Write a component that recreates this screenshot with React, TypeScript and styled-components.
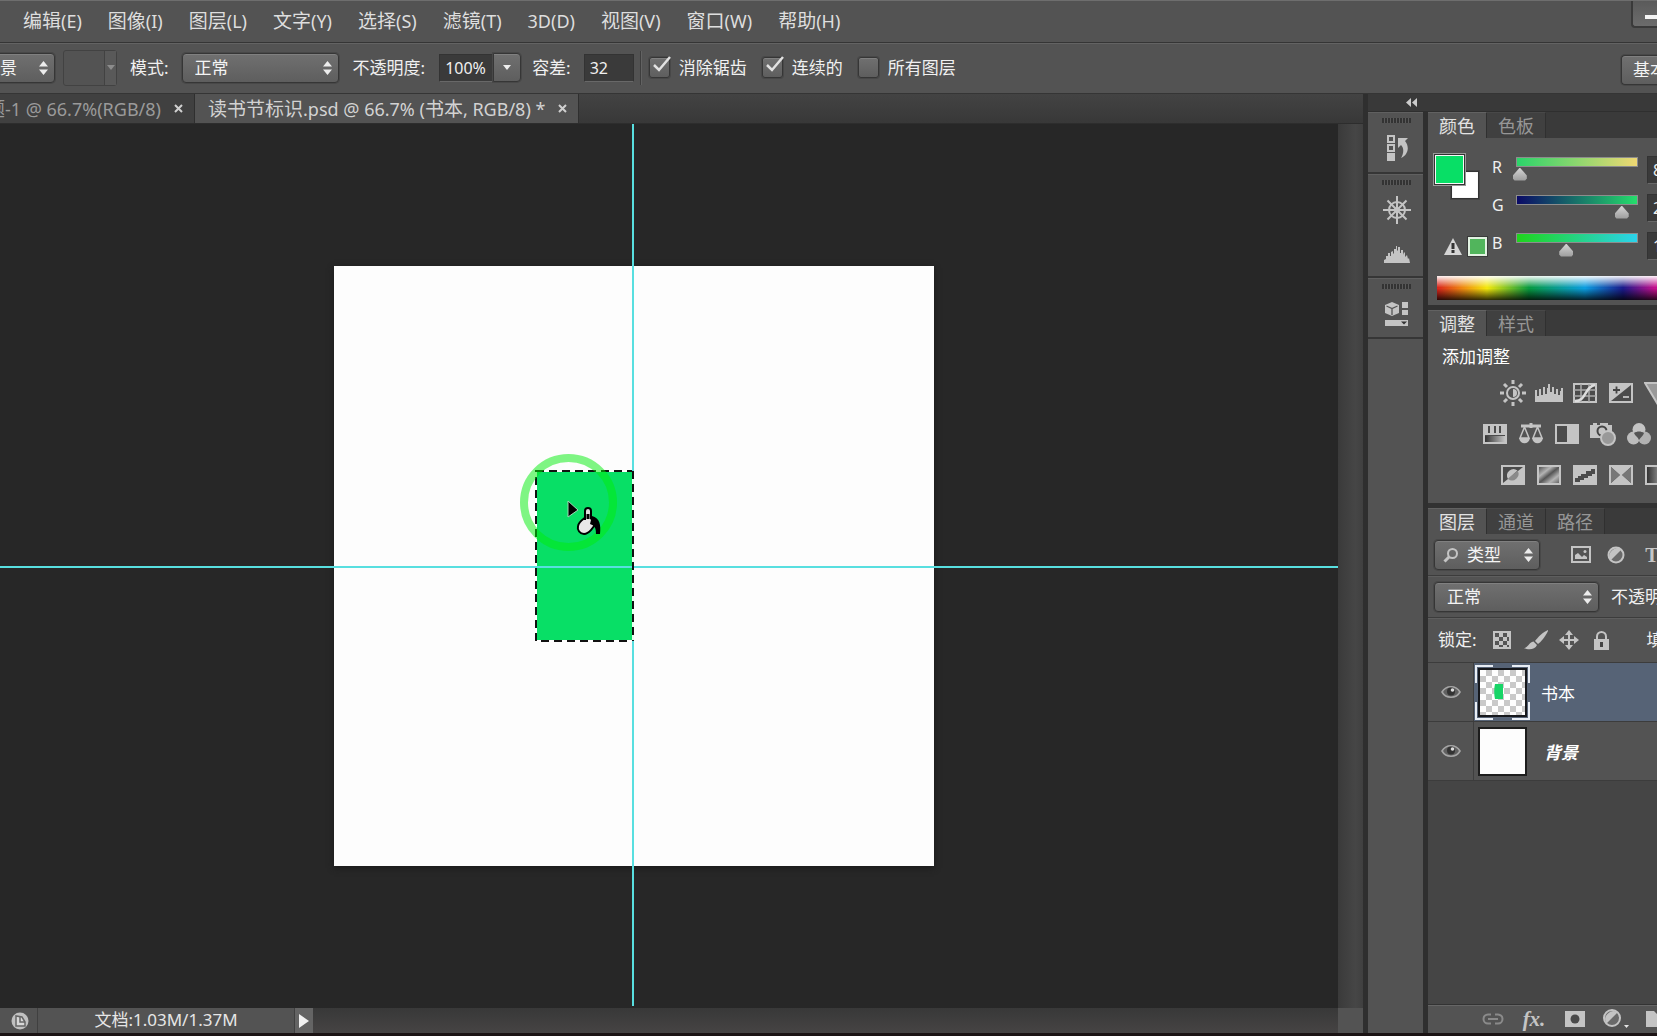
import React from "react";
import styled, { createGlobalStyle, css } from "styled-components";

const Global = createGlobalStyle`
  *, *::before, *::after { box-sizing: border-box; }
  html, body { margin: 0; height: 100%; overflow: hidden; background: #1b1314; }
  body, button, input, select {
    font-family: "Noto Sans", "Open Sans", "Noto Sans CJK SC", sans-serif;
  }
  button, input, select { margin: 0; color: inherit; }
  button { padding: 0; border: 0; background: none; }
  svg { display: block; flex: none; }
`;

const Window = styled.div`
  display: flex;
  flex-direction: column;
  height: 100vh;
  overflow: hidden;
  color: #f0f0f0;
  background: #535353;
  font-size: 17px;
  line-height: 20px;
  white-space: nowrap;
  border-bottom: 3px solid #1b1314;
`;

/* ---------- menu bar ---------- */

const MenuBar = styled.nav`
  display: flex;
  flex: none;
  justify-content: space-between;
  height: 43px;
  border-top: 1px solid #6e6e6e;
  border-bottom: 1px solid #353535;
`;

const MenuList = styled.div`
  display: flex;
  align-items: center;
  gap: 26px;
  padding: 0 23px 2px;
`;

const MenuButton = styled.button`
  color: #dedede;
  font-size: 18px;
  line-height: 24px;
`;

const Han = styled.span`
  font-size: 19px;
`;

const MinimizeButton = styled.button`
  display: flex;
  flex: none;
  align-items: center;
  justify-content: flex-end;
  width: 26px;
  height: 27px;
  border: 2px solid #3a3a3a;
  border-width: 0 0 2px 2px;
  border-radius: 0 0 0 4px;
  background: linear-gradient(#5a5a5a, #6c6c6c);
`;

const MinimizeBar = styled.span`
  width: 12px;
  height: 4px;
  margin-top: 6px;
  background: #f4f4f4;
`;

/* ---------- shared controls ---------- */

const raised = css`
  border: 1px solid #363636;
  border-radius: 4px;
  background: linear-gradient(#707070, #5e5e5e);
  box-shadow: inset 0 1px #808080, 0 0 0 1px #484848;
`;

const SelectFrame = styled.div<{ $width: number }>`
  ${raised}
  display: flex;
  flex: none;
  align-items: center;
  width: ${(p) => p.$width}px;
  height: 30px;
  padding-right: 6px;
`;

const SelectBox = styled.select<{ $indent?: number }>`
  flex: 1;
  min-width: 0;
  height: 28px;
  padding: 0 0 0 ${(p) => p.$indent ?? 12}px;
  appearance: none;
  border: 0;
  outline: 0;
  background: transparent;
  color: #f4f4f4;
  font-size: 17px;
  line-height: 20px;
`;

const UpDown = () => (
  <svg width="9" height="14" viewBox="0 0 9 14" fill="#ececec">
    <path d="M4.5 0 9 5.5H0ZM4.5 14 0 8.5h9Z" />
  </svg>
);

const NumberBox = styled.input<{ $width: number }>`
  width: ${(p) => p.$width}px;
  height: 28px;
  padding: 0 5px;
  border: 1px solid #333;
  border-bottom-color: #686868;
  border-radius: 0;
  outline: 0;
  background: #3a3a3a;
  color: #f0f0f0;
  font-size: 16px;
`;

/* ---------- options bar ---------- */

const OptionsBar = styled.div`
  display: flex;
  flex: none;
  justify-content: space-between;
  height: 51px;
  overflow: hidden;
  border-top: 1px solid #636363;
  border-bottom: 1px solid #353535;
`;

const Options = styled.div`
  display: flex;
  align-items: center;
  padding-bottom: 2px;
  margin-left: -26px;
`;

const PatternPicker = styled.button`
  display: flex;
  width: 54px;
  height: 36px;
  margin: 0 13px 0 8px;
  border: 1px solid #424242;
  border-radius: 3px;
`;

const PatternArrow = styled.span`
  display: grid;
  place-items: center;
  width: 12px;
  height: 100%;
  margin-left: auto;
  border-left: 1px solid #424242;
  background: #595959;
`;

const Field = styled.label`
  display: flex;
  align-items: center;
  gap: 13px;
  margin-right: 14px;
`;

const Joined = styled.div`
  display: flex;
  align-items: center;
  margin-right: 11px;
`;

const JoinedLabel = styled.label`
  margin-right: 14px;
`;

const DropButton = styled.button`
  ${raised}
  display: grid;
  place-items: center;
  width: 28px;
  height: 29px;
  border-radius: 0 4px 4px 0;
`;

const Rule = styled.span`
  width: 2px;
  height: 34px;
  margin: 0 7px 0 -8px;
  border-left: 1px solid #3e3e3e;
  border-right: 1px solid #626262;
`;

const Check = styled.label`
  display: flex;
  align-items: center;
  gap: 9px;
  margin-right: 15px;
`;

const Box = styled.span`
  ${raised}
  position: relative;
  width: 21px;
  height: 21px;
  border-radius: 3px;

  input {
    position: absolute;
    inset: 0;
    width: 100%;
    height: 100%;
    margin: 0;
    opacity: 0;
  }
  svg {
    position: absolute;
    left: 2px;
    top: -2px;
    display: none;
  }
  input:checked + svg { display: block; }
`;

const WorkspaceButton = styled.button`
  ${raised}
  flex: none;
  align-self: flex-start;
  width: 36px;
  height: 30px;
  margin-top: 11px;
  padding-left: 11px;
  overflow: hidden;
  border-right: 0;
  border-radius: 4px 0 0 4px;
  color: #f4f4f4;
  font-size: 17px;
  line-height: 26px;
  text-align: left;
`;

/* ---------- document area ---------- */

const Workspace = styled.div`
  display: flex;
  flex: 1;
  min-height: 0;
`;

const DocumentArea = styled.main`
  display: flex;
  flex: 1;
  flex-direction: column;
  min-width: 0;
`;

const TabStrip = styled.div`
  display: flex;
  flex: none;
  height: 30px;
  border-bottom: 1px solid #2d2d2d;
  background: linear-gradient(#434343, #383838);
`;

const DocTab = styled.div<{ $active?: boolean }>`
  display: flex;
  align-items: center;
  justify-content: flex-end;
  gap: 12px;
  padding: 0 10px 0 13px;
  border-right: 1px solid #2f2f2f;
  background: ${(p) => (p.$active ? "#535353" : "#404040")};
  color: ${(p) => (p.$active ? "#d2d2d2" : "#9a9a9a")};
  ${(p) => !p.$active && "width: 195px; overflow: hidden;"}
`;

const TabLabel = styled.button`
  flex: none;
  color: inherit;
  font-size: 18px;
  line-height: 24px;
`;

const CloseButton = styled.button`
  width: 11px;
  height: 12px;
`;

const CanvasRow = styled.div`
  display: flex;
  flex: 1;
  min-height: 0;
`;

const Stage = styled.div`
  position: relative;
  flex: 1;
  overflow: hidden;
  background: #272727;
`;

const Artboard = styled.div`
  position: absolute;
  left: 334px;
  top: 142px;
  width: 600px;
  height: 600px;
  background: #fdfdfd;
  box-shadow: 0 2px 6px #1a1a1a;
`;

const Selection = styled.svg`
  position: absolute;
  left: 535px;
  top: 346px;
`;

const Guide = styled.div<{ $axis: "x" | "y" }>`
  position: absolute;
  background: #58dfe0;
  ${(p) =>
    p.$axis === "x"
      ? "left: 0; right: 0; top: 442px; height: 2px;"
      : "top: 0; bottom: 2px; left: 632px; width: 2px;"}
`;

const ClickRing = styled.div`
  position: absolute;
  left: 520px;
  top: 330px;
  width: 97px;
  height: 97px;
  border: 8px solid rgba(0, 238, 10, 0.5);
  border-radius: 50%;
`;

const BucketCursor = styled.svg`
  position: absolute;
  left: 566px;
  top: 376px;
`;

const ScrollTrack = styled.div`
  flex: none;
  width: 25px;
  background: linear-gradient(90deg, #3a3a3a, #464646 70%, #404040);
`;

const StatusBar = styled.footer`
  display: flex;
  flex: none;
  height: 25px;
  background: linear-gradient(#383838, #464444);
`;

const StatusIcon = styled.button`
  display: grid;
  place-items: center;
  width: 38px;
  padding-left: 3px;
  border-right: 1px solid #404040;
  background: #535353;
`;

const StatusText = styled.div`
  width: 257px;
  border-right: 1px solid #404040;
  background: #535353;
  color: #e6e6e6;
  line-height: 24px;
  text-align: center;
`;

const StatusArrow = styled.button`
  display: grid;
  place-items: center;
  width: 18px;
  background: #646464;
`;

const ScrollCorner = styled.div`
  width: 25px;
  margin-left: auto;
  background: #535353;
`;

/* ---------- dock ---------- */

const Dock = styled.aside`
  display: flex;
  flex: none;
  flex-direction: column;
  width: 294px;
  border-left: 5px solid #2f2f2f;
  overflow: hidden;
`;

const DockHeader = styled.div`
  flex: none;
  height: 18px;
  padding: 4px 0 0 38px;
  background: #393939;
  border-bottom: 1px solid #2f2f2f;
`;

const DockBody = styled.div`
  display: flex;
  flex: 1;
  min-height: 0;
`;

const IconButton = styled.button`
  display: grid;
  flex: none;
  place-items: center;
  width: 28px;
  height: 28px;
`;

const IconColumn = styled.div`
  flex: none;
  width: 55px;
`;

const IconGroup = styled.div<{ $height: number }>`
  display: flex;
  flex-direction: column;
  align-items: center;
  height: ${(p) => p.$height}px;
  padding: 5px 0 0 2px;
  border-top: 1px solid #606060;
  border-bottom: 2px solid #363636;

  ${IconButton} + ${IconButton} { margin-top: 16px; }
`;

const Grip = styled.span`
  flex: none;
  width: 29px;
  height: 5px;
  margin-bottom: 11px;
  background: repeating-linear-gradient(90deg, #333 0 2px, #5a5a5a 2px 3px);
`;

const Panels = styled.div`
  display: flex;
  flex: 1;
  flex-direction: column;
  min-width: 0;
  border-left: 5px solid #2f2f2f;
`;

const Panel = styled.section<{ $grow?: boolean }>`
  display: flex;
  flex: ${(p) => (p.$grow ? "1" : "none")};
  flex-direction: column;
  min-height: 0;
  overflow: hidden;
  border-bottom: ${(p) => (p.$grow ? "0" : "5px solid #323232")};
`;

const PanelTabs = styled.div`
  display: flex;
  flex: none;
  height: 26px;
  background: #3a3a3a;
`;

const PanelTab = styled.button<{ $active?: boolean }>`
  height: 26px;
  padding: 0 11px;
  border-top: 1px solid ${(p) => (p.$active ? "#626262" : "#484848")};
  border-right: 1px solid #303030;
  background: ${(p) => (p.$active ? "#535353" : "#404040")};
  color: ${(p) => (p.$active ? "#e2e2e2" : "#969696")};
  font-size: 18px;
  line-height: 24px;
`;

const ColorBody = styled.div`
  display: flex;
  height: 138px;
  padding-top: 16px;
`;

const SwatchColumn = styled.div`
  display: flex;
  flex: none;
  flex-direction: column;
  justify-content: space-between;
  width: 64px;
  padding: 0 0 20px 6px;
`;

const SwatchPair = styled.div`
  display: grid;
  grid-template: 17px 14px 14px / 17px 14px 14px;
`;

const Swatch = styled.button<{ $color: string; $front?: boolean }>`
  grid-area: ${(p) => (p.$front ? "1 / 1 / 3 / 3" : "2 / 2 / 4 / 4")};
  z-index: ${(p) => (p.$front ? 1 : 0)};
  border: 2px solid #f8f8f8;
  outline: 1px solid #333;
  outline-offset: -1px;
  box-shadow: 0 0 0 1px ${(p) => (p.$front ? "#999" : "#444")};
  background: ${(p) => p.$color};
`;

const GamutRow = styled.div`
  display: flex;
  align-items: center;
  gap: 6px;
  padding-left: 10px;
`;

const GamutSwatch = styled.button`
  width: 19px;
  height: 19px;
  border: 2px solid #e2f2e2;
  outline: 1px solid #3a3a3a;
  background: #51b55c;
`;

const Sliders = styled.div`
  flex: 1;
  min-width: 0;
  padding-top: 2px;
`;

const SliderRow = styled.div`
  display: flex;
  align-items: flex-start;
  height: 38px;
`;

const Letter = styled.span`
  flex: none;
  width: 24px;
  font-size: 16px;
  line-height: 22px;
`;

const SliderControl = styled.span`
  display: flex;
  flex: none;
  flex-direction: column;
  width: 122px;
  padding-top: 1px;
  margin-right: 9px;
`;

const Track = styled.span<{ $from: string; $to: string }>`
  height: 10px;
  border: 1px solid #8d8d8d;
  background: linear-gradient(90deg, ${(p) => p.$from}, ${(p) => p.$to});
`;

const Range = styled.input`
  width: auto;
  height: 14px;
  margin: 0 -7px;
  appearance: none;
  background: transparent;

  &::-webkit-slider-thumb {
    appearance: none;
    width: 14px;
    height: 13px;
    background: linear-gradient(#d5d5d5, #9c9c9c);
    clip-path: polygon(50% 0, 100% 62%, 100% 85%, 88% 100%, 12% 100%, 0 85%, 0 62%);
  }
`;

const Spectrum = styled.div`
  height: 24px;
  margin: 0 0 5px 9px;
  background:
    linear-gradient(rgba(255, 255, 255, 0.95), rgba(255, 255, 255, 0) 48%, rgba(0, 0, 0, 0) 52%, rgba(0, 0, 0, 0.8)),
    linear-gradient(90deg, #d8231c 0, #ef8a10 26px, #f3e80c 50px, #079a40 92px, #0b9de0 148px, #1a1a8a 186px, #c4108c 218px);
`;

const AdjustBody = styled.div`
  height: 167px;
  padding-left: 14px;
`;

const AdjustTitle = styled.h2`
  margin: 11px 0 12px;
  color: #fff;
  font-size: 17px;
  font-weight: 400;
  line-height: 20px;
`;

const AdjustRow = styled.div<{ $indent: number }>`
  display: flex;
  gap: 8px;
  height: 28px;
  margin: 0 0 13px ${(p) => p.$indent}px;
`;

const LayerBar = styled.div<{ $height: number }>`
  display: flex;
  flex: none;
  align-items: center;
  height: ${(p) => p.$height}px;
  padding-left: 6px;
  border-bottom: 1px solid #3c3c3c;
  box-shadow: 0 1px #5e5e5e;
`;

const Spacer = styled.span<{ $width: number }>`
  flex: none;
  width: ${(p) => p.$width}px;
`;

const TypeMark = styled.span`
  font: 700 20px/28px "Liberation Serif", serif;
  color: #c6c6c6;
`;

const LayerText = styled.span`
  flex: none;
  padding: 0 4px;
`;

const LayerRow = styled.div<{ $selected?: boolean }>`
  display: flex;
  flex: none;
  align-items: center;
  height: 59px;
  border-bottom: 1px solid #3c3c3c;
  background: ${(p) => (p.$selected ? "#566376" : "#535353")};
`;

const EyeCell = styled.button`
  display: grid;
  place-items: center;
  flex: none;
  width: 46px;
  height: 100%;
  border-right: 1px solid #3e3e3e;
  background: #535353;
`;

const LayerName = styled.span<{ $locked?: boolean }>`
  padding: 3px 0 0 ${(p) => (p.$locked ? 13 : 10)}px;
  color: #fff;
  ${(p) => p.$locked && "font-style: italic; font-weight: 700;"}
`;

const EmptyList = styled.div`
  flex: 1;
  background: #454545;
`;

const LayerFooter = styled.div`
  display: flex;
  flex: none;
  gap: 13px;
  height: 29px;
  padding-left: 51px;
  border-top: 1px solid #333;
  box-shadow: inset 0 1px #666;
`;

const FxMark = styled.span`
  font: italic 700 21px/24px "Liberation Serif", serif;
  color: #c4c4c4;
`;

/* ---------- icons ---------- */

const G = "#c4c4c4";
const D = "#4b4b4b";

const Svg = ({ w = 26, h = 24, children }: { w?: number; h?: number; children: React.ReactNode }) => (
  <svg width={w} height={h} viewBox={`0 0 ${w} ${h}`} fill="none">
    {children}
  </svg>
);

const Frame = () => <rect x="2" y="3" width="22" height="18" fill={D} stroke={G} strokeWidth="2" />;

const HistoryIcon = () => (
  <Svg w={24} h={28}>
    <path d="M3 2h6v6H3zM3 11h6v6H3z" stroke={G} strokeWidth="2" />
    <path d="M2 19h8v8H2z" fill={G} />
    <path d="M13 4h10l-3 3c5 6 3 14-4 17 3-5 3-10 0-13l-3 3z" fill={G} />
  </Svg>
);

const WheelIcon = () => (
  <Svg w={28} h={28}>
    <g stroke={G}>
      <circle cx="14" cy="14" r="8" strokeWidth="2" />
      <circle cx="14" cy="14" r="2.5" fill={G} />
      <path d="M14 0v28M0 14h28M4.500 4.500l19 19M23.500 4.500l-19 19" strokeWidth="2" />
    </g>
  </Svg>
);

const HistogramIcon = () => (
  <Svg w={28} h={18}>
    <path d="M1 18v-3l2-1v-3h2V8h2v3h1V7l2-1v3l1-1V4h2V1h1v5l1-1V2h2v6h1V5h2v5l1-3 1 1v4l2-2 1 4 1-1 1 5z" fill={G} />
  </Svg>
);

const CubeIcon = () => (
  <Svg w={26} h={28}>
    <path d="M8 2l7 3v8l-7 3-7-3V5z" fill={G} />
    <path d="M2.500 6 8 8.500 13.500 6M8 8.500V15" stroke="#555" strokeWidth="1.3" />
    <path d="M18 2h6v6h-6zM18 10h6v5h-6zM1 20h23v6H1z" fill={G} />
    <path d="M17 21.500h6l-3 3z" fill="#333" />
  </Svg>
);

const Brightness = () => (
  <Svg w={26} h={26}>
    <circle cx="13" cy="13" r="6" stroke={G} strokeWidth="2" />
    <path d="M13 9a4 4 0 0 1 0 8z" fill={G} />
    <path d="M13 0v4M13 22v4M0 13h4M22 13h4M4 4l3 3M19 19l3 3M4 22l3-3M19 7l3-3" stroke={G} strokeWidth="3" />
  </Svg>
);

const Levels = () => (
  <Svg w={28} h={18}>
    <path d="M0 18V6h2v6h2V5h2v6h2V3h2v7h2V4h1V0h2v8h2V3h2v7h2V5h2v6h2V7h1V4h2v14z" fill={G} />
  </Svg>
);

const Curves = () => (
  <Svg>
    <Frame />
    <path d="M2 9h22M2 15h22M9 3v18M17 3v18" stroke="#aaa" strokeWidth="1.5" />
    <path d="M3 20c12 0 9-14 20-16" stroke="#ddd" strokeWidth="2.5" />
  </Svg>
);

const Exposure = () => (
  <Svg>
    <Frame />
    <path d="M3 20V4h20z" fill={G} />
    <path d="M5 9h7M8.500 5.500v7" stroke="#444" strokeWidth="1.8" />
    <path d="M15 16h6" stroke={G} strokeWidth="1.8" />
  </Svg>
);

const Vibrance = () => (
  <Svg>
    <path d="M1 2h24L13 22z" fill="#999" stroke={G} strokeWidth="2" />
  </Svg>
);

const HueSat = () => (
  <Svg>
    <defs>
      <linearGradient id="hs">
        <stop stopColor="#333" />
        <stop offset="1" stopColor={G} />
      </linearGradient>
    </defs>
    <Frame />
    <path d="M3 4h3v7H3zM8 4h4v7H8zM14 4h3v7h-3zM19 4h4v7h-4zM2 11h22v2H2z" fill={G} />
    <path d="M3 14h20v6H3z" fill="url(#hs)" />
  </Svg>
);

const Balance = () => (
  <Svg>
    <path d="M3 4h20M13 1v5" stroke={G} strokeWidth="3" />
    <path d="M6.500 5 2 16h9zM19.500 5 15 16h9z" stroke={G} strokeWidth="1.5" />
    <path d="M1 16h11c-1 7-10 7-11 0zM14 16h11c-1 7-10 7-11 0z" fill={G} />
  </Svg>
);

const BlackWhite = () => (
  <Svg>
    <Frame />
    <path d="M13 4h10v16H13z" fill={G} />
  </Svg>
);

const PhotoFilter = () => (
  <Svg>
    <path d="M0 3h3V1h4v2h3V1h8v2h4v13H0z" fill={G} />
    <circle cx="12" cy="9" r="4.5" stroke="#444" strokeWidth="2" />
    <circle cx="18" cy="16" r="7" fill="#999" stroke={G} strokeWidth="2" />
  </Svg>
);

const Mixer = () => (
  <Svg>
    <circle cx="13" cy="7.5" r="6.5" fill={G} />
    <circle cx="7.5" cy="16" r="6.5" fill="#bdbdbd" />
    <circle cx="18.5" cy="16" r="6.5" fill="#b2b2b2" />
    <path d="M8 11c3-2 7-2 10 0-1 3-3 4-5 7-1-3-4-4-5-7z" fill="#555" />
  </Svg>
);

const Invert = () => (
  <Svg>
    <Frame />
    <path d="M3 20 23 4v16z" fill={G} />
    <path d="M8 16a6.500 6.500 0 0 1 9.500-8.500z" fill={G} />
    <path d="M17.500 7.500A6.500 6.500 0 0 1 8 16z" fill="#8a8a8a" />
  </Svg>
);

const Posterize = () => (
  <Svg>
    <defs>
      <linearGradient id="bands" x1="0" y1="0" x2="1" y2="1">
        <stop stopColor="#555" />
        <stop offset="0.3" stopColor="#b4b4b4" />
        <stop offset="0.5" stopColor="#555" />
        <stop offset="0.75" stopColor="#b4b4b4" />
        <stop offset="1" stopColor="#666" />
      </linearGradient>
    </defs>
    <Frame />
    <path d="M3 4h20v16H3z" fill="url(#bands)" />
  </Svg>
);

const Threshold = () => (
  <Svg>
    <Frame />
    <path d="M3 4h20v2h-4v2h-5v3H9v2H6v2H3zM3 20v-1h5v-2h4v-2h4v-2h4v-2h3v9z" fill={G} />
  </Svg>
);

const Selective = () => (
  <Svg>
    <Frame />
    <path d="M3 4h20L13 13z" fill={G} />
    <path d="M3 20h20L13 11z" fill={G} />
    <path d="M3 4v16l9-8zM23 4v16l-9-8z" fill="#777" />
  </Svg>
);

const GradientMap = () => (
  <Svg>
    <Frame />
    <path d="M3 4h20v16H3z" fill="url(#hs)" />
  </Svg>
);

const Warning = () => (
  <Svg w={18} h={17}>
    <path d="M9 0l9 17H0z" fill="#d5d5d5" />
    <path d="M9 5v6M9 12v3" stroke="#333" strokeWidth="3" />
  </Svg>
);

const SearchIcon = () => (
  <Svg w={16} h={16}>
    <circle cx="9.5" cy="6.5" r="4.5" stroke={G} strokeWidth="2" />
    <path d="M6 10l-4.500 4.500" stroke={G} strokeWidth="3" />
  </Svg>
);

const PictureIcon = () => (
  <Svg w={20} h={17}>
    <path d="M1 1h18v15H1z" stroke={G} strokeWidth="2" />
    <path d="M4 13V9l3-2 4 4 2-2 3 2v2z" fill={G} />
    <circle cx="14" cy="5.5" r="1.5" fill={G} />
  </Svg>
);

const HalfCircle = () => (
  <Svg w={18} h={18}>
    <circle cx="9" cy="9" r="7.5" fill="#6a6a6a" stroke={G} strokeWidth="2" />
    <path d="M14.500 3.500A8 8 0 0 0 3.500 14.500z" fill={G} />
  </Svg>
);

const HalfCircleMenu = () => (
  <Svg w={28} h={22}>
    <circle cx="10" cy="10" r="8" fill="#6a6a6a" stroke={G} strokeWidth="2" />
    <path d="M15.500 4.500A8 8 0 0 0 4.500 15.500z" fill={G} />
    <path d="M22 17h5l-2.500 3z" fill="#e4e4e4" />
  </Svg>
);

const CheckerIcon = () => (
  <Svg w={18} h={18}>
    <path d="M1 1h16v16H1z" fill="#555" stroke={G} strokeWidth="2" />
    <path d="M6 2h4v4H6zM14 2h3v4h-3zM2 6h4v4H2zM10 6h4v4h-4zM6 10h4v4H6zM14 10h3v4h-3zM2 14h4v3H2zM10 14h4v3h-4z" fill={G} />
  </Svg>
);

const BrushIcon = () => (
  <Svg w={24} h={20}>
    <path d="M24 1c-3 6-7 11-10 13l-3-3C14 7 19 2 24 0z" fill={G} />
    <path d="M9.500 11.500 13 15c-2 5-9 5-13 3 4 0 5-6 9.500-6.500z" fill={G} />
  </Svg>
);

const MoveIcon = () => (
  <Svg w={20} h={20}>
    <path d="M10 3v14M3 10h14" stroke={G} strokeWidth="2" />
    <path d="M10 0l4 5H6zM10 20l-4-5h8zM0 10l5-4v8zM20 10l-5 4V6z" fill={G} />
  </Svg>
);

const LockIcon = () => (
  <Svg w={17} h={19}>
    <path d="M4 9V5.500a4.500 4.500 0 0 1 9 0V9" stroke={G} strokeWidth="2" />
    <path d="M1 8h15v11H1z" fill={G} />
    <path d="M8.500 11v5" stroke="#444" strokeWidth="3" />
  </Svg>
);

const EyeIcon = () => (
  <Svg w={20} h={14}>
    <path d="M1 7c4-7 14-7 18 0-4 7-14 7-18 0z" fill="#606060" stroke="#a6a6a6" strokeWidth="1.6" />
    <circle cx="10" cy="6.5" r="4" fill="#333" />
    <circle cx="11.500" cy="5" r="1.8" fill="#ddd" />
  </Svg>
);

const LinkIcon = () => (
  <Svg w={22} h={12}>
    <path d="M9 1.500H6a4.500 4.500 0 0 0 0 9h3M13 1.500h3a4.500 4.500 0 0 1 0 9h-3M6 6h10" stroke="#8a8a8a" strokeWidth="2" />
  </Svg>
);

const MaskIcon = () => (
  <Svg w={20} h={16}>
    <path d="M0 0h20v16H0z" fill={G} />
    <circle cx="10" cy="8" r="4.5" fill="#4a4a4a" />
  </Svg>
);

const FolderIcon = () => (
  <Svg w={22} h={16}>
    <path d="M0 0h8l3 3h11v13H0z" fill={G} />
  </Svg>
);

const SyncIcon = () => (
  <Svg w={20} h={20}>
    <circle cx="10" cy="10" r="8.5" fill="#c0c0c0" />
    <path d="M6 5v10h9v-4l-3-5z" fill="#d8d8d8" stroke="#666" strokeWidth="1.5" />
    <path d="M10 6v5h5" stroke="#666" strokeWidth="1.5" />
  </Svg>
);

const CloseIcon = () => (
  <Svg w={11} h={11}>
    <path d="M2 2l7 7M9 2 2 9" stroke="#d0d0d0" strokeWidth="2" />
  </Svg>
);

const Caret = ({ color = "#eee" }: { color?: string }) => (
  <Svg w={8} h={5}>
    <path d="M0 0h8L4 5z" fill={color} />
  </Svg>
);

const LayerThumb = () => (
  <Svg w={57} h={57}>
    <defs>
      <pattern id="checks" width="12" height="12" patternUnits="userSpaceOnUse" x="6" y="6">
        <path d="M0 0h12v12H0z" fill="#fff" />
        <path d="M6 0h6v6H6zM0 6h6v6H0z" fill="#cacaca" />
      </pattern>
    </defs>
    <rect x="5" y="5" width="47" height="47" fill="url(#checks)" stroke="#16181c" strokeWidth="2" />
    <path d="M21 20h8v15h-8c-1-4-1-11 0-15z" fill="#18d567" />
    <path d="M2 19V2h17M38 2h17v17M55 38v17H38M19 55H2V38" stroke="#e8edf4" strokeWidth="2" />
  </Svg>
);

const PlainThumb = () => (
  <Svg w={57} h={57}>
    <rect x="5" y="5" width="47" height="47" fill="#fdfdfd" stroke="#1d1d1d" strokeWidth="2" />
  </Svg>
);

/* ---------- pieces ---------- */

/** Sets the Chinese runs of a label one step larger than its Latin runs. */
const Mixed = ({ text }: { text: string }) => (
  <>
    {text.split(/([\u4e00-\u9fff]+)/).map((run, i) =>
      i % 2 ? <Han key={i}>{run}</Han> : run
    )}
  </>
);

const menus = [
  "编辑(E)", "图像(I)", "图层(L)", "文字(Y)", "选择(S)", "滤镜(T)", "3D(D)", "视图(V)", "窗口(W)", "帮助(H)",
];

const checks = [
  { label: "消除锯齿", on: true },
  { label: "连续的", on: true },
  { label: "所有图层", on: false },
];

const channels = [
  { name: "R", value: 8, from: "#2bd46a", to: "#efd873" },
  { name: "G", value: 221, from: "#0b0a66", to: "#25dd6c" },
  { name: "B", value: 105, from: "#1fd41c", to: "#2bd3ec" },
];

const adjustments = [
  { indent: 57, icons: [["亮度", Brightness], ["色阶", Levels], ["曲线", Curves], ["曝光度", Exposure], ["自然饱和度", Vibrance]] },
  { indent: 39, icons: [["色相", HueSat], ["色彩平衡", Balance], ["黑白", BlackWhite], ["照片滤镜", PhotoFilter], ["通道混合器", Mixer]] },
  { indent: 57, icons: [["反相", Invert], ["色调分离", Posterize], ["阈值", Threshold], ["可选颜色", Selective], ["渐变映射", GradientMap]] },
] as { indent: number; icons: [string, React.FC][] }[];

const Dropdown = ({ label, value, width, indent, icon }: {
  label: string; value: string; width: number; indent?: number; icon?: React.ReactNode;
}) => (
  <SelectFrame $width={width}>
    {icon}
    <SelectBox aria-label={label} $indent={indent}>
      <option>{value}</option>
    </SelectBox>
    <UpDown />
  </SelectFrame>
);

const Tabs = ({ names }: { names: string[] }) => (
  <PanelTabs>
    {names.map((n, i) => (
      <PanelTab key={n} $active={i === 0}>{n}</PanelTab>
    ))}
  </PanelTabs>
);

export default function App() {
  return (
    <Window>
      <Global />
      <MenuBar>
        <MenuList>
          {menus.map((m) => (
            <MenuButton key={m}><Mixed text={m} /></MenuButton>
          ))}
        </MenuList>
        <MinimizeButton aria-label="最小化"><MinimizeBar /></MinimizeButton>
      </MenuBar>

      <OptionsBar>
        <Options>
          <Dropdown label="填充源" value="前景" width={81} indent={8} />
          <PatternPicker aria-label="图案">
            <PatternArrow><Caret color="#8c8c8c" /></PatternArrow>
          </PatternPicker>
          <Field>
            模式:
            <Dropdown label="模式" value="正常" width={157} />
          </Field>
          <Joined>
            <JoinedLabel htmlFor="opacity">不透明度:</JoinedLabel>
            <NumberBox id="opacity" $width={54} defaultValue="100%" />
            <DropButton aria-label="不透明度滑块"><Caret /></DropButton>
          </Joined>
          <Field>
            容差:
            <NumberBox $width={50} defaultValue="32" />
          </Field>
          <Rule />
          {checks.map((c) => (
            <Check key={c.label}>
              <Box>
                <input type="checkbox" defaultChecked={c.on} />
                <svg width="20" height="18" viewBox="0 0 20 18" fill="none">
                  <path d="M2 9l5 5L18 1" stroke="#e2e2e2" strokeWidth="2.5" />
                </svg>
              </Box>
              {c.label}
            </Check>
          ))}
        </Options>
        <WorkspaceButton>基本功能</WorkspaceButton>
      </OptionsBar>

      <Workspace>
        <DocumentArea>
          <TabStrip>
            <DocTab>
              <TabLabel><Mixed text="未标题-1 @ 66.7%(RGB/8)" /></TabLabel>
              <CloseButton aria-label="关闭"><CloseIcon /></CloseButton>
            </DocTab>
            <DocTab $active>
              <TabLabel><Mixed text="读书节标识.psd @ 66.7% (书本, RGB/8) *" /></TabLabel>
              <CloseButton aria-label="关闭"><CloseIcon /></CloseButton>
            </DocTab>
          </TabStrip>
          <CanvasRow>
            <Stage>
              <Artboard />
              <Selection width="99" height="172" viewBox="0 0 99 172" fill="none">
                <rect x="1" y="1" width="97" height="170" fill="#08df66" stroke="#fff" strokeWidth="2" />
                <rect x="1" y="1" width="97" height="170" stroke="#111" strokeWidth="2" strokeDasharray="8 5" />
              </Selection>
              <Guide $axis="y" />
              <Guide $axis="x" />
              <Selection width="99" height="172" viewBox="0 0 99 172" fill="none">
                <path d="M98 1v170" stroke="#e8fff0" strokeWidth="2" />
                <path d="M98 1v170" stroke="#111" strokeWidth="2" strokeDasharray="8 5" />
              </Selection>
              <ClickRing />
              <BucketCursor width="38" height="38" viewBox="0 0 38 38">
                <path d="M2 1v16l10-7z" fill="#000" stroke="#9fd8b4" />
                <path d="M12 26c1-5 6-7 9-10l9 6c-2 5-7 12-12 12-4 0-7-4-6-8z" fill="#e8e8e8" stroke="#000" strokeWidth="2" />
                <path d="M19 20v-9c0-4 6-4 6 0v8" fill="#ddd" stroke="#000" strokeWidth="2" />
                <path d="M22 14v5" stroke="#000" strokeWidth="3" />
                <path d="M26 16c8 2 9 9 8 18h-4c0-6-1-8-6-10z" fill="#000" />
              </BucketCursor>
            </Stage>
            <ScrollTrack />
          </CanvasRow>
          <StatusBar>
            <StatusIcon aria-label="同步"><SyncIcon /></StatusIcon>
            <StatusText>文档:1.03M/1.37M</StatusText>
            <StatusArrow aria-label="更多">
              <Svg w={10} h={14}><path d="M0 0l10 7-10 7z" fill="#f2f2f2" /></Svg>
            </StatusArrow>
            <ScrollCorner />
          </StatusBar>
        </DocumentArea>

        <Dock>
          <DockHeader>
            <Svg w={12} h={10}><path d="M5 0v9L0 4.500zM11 0v9L6 4.500z" fill="#ccc" /></Svg>
          </DockHeader>
          <DockBody>
            <IconColumn>
              <IconGroup $height={62}>
                <Grip />
                <IconButton aria-label="历史记录"><HistoryIcon /></IconButton>
              </IconGroup>
              <IconGroup $height={104}>
                <Grip />
                <IconButton aria-label="导航器"><WheelIcon /></IconButton>
                <IconButton aria-label="直方图"><HistogramIcon /></IconButton>
              </IconGroup>
              <IconGroup $height={61}>
                <Grip />
                <IconButton aria-label="属性"><CubeIcon /></IconButton>
              </IconGroup>
            </IconColumn>
            <Panels>
              <Panel>
                <Tabs names={["颜色", "色板"]} />
                <ColorBody>
                  <SwatchColumn>
                    <SwatchPair>
                      <Swatch $front $color="#08df66" aria-label="前景色" />
                      <Swatch $color="#fff" aria-label="背景色" />
                    </SwatchPair>
                    <GamutRow>
                      <Warning />
                      <GamutSwatch aria-label="色域警告" />
                    </GamutRow>
                  </SwatchColumn>
                  <Sliders>
                    {channels.map((c) => (
                      <SliderRow key={c.name}>
                        <Letter>{c.name}</Letter>
                        <SliderControl>
                          <Track $from={c.from} $to={c.to} />
                          <Range type="range" max={255} defaultValue={c.value} aria-label={c.name} />
                        </SliderControl>
                        <NumberBox $width={50} defaultValue={c.value} aria-label={`${c.name} 值`} />
                      </SliderRow>
                    ))}
                  </Sliders>
                </ColorBody>
                <Spectrum />
              </Panel>

              <Panel>
                <Tabs names={["调整", "样式"]} />
                <AdjustBody>
                  <AdjustTitle>添加调整</AdjustTitle>
                  {adjustments.map((row) => (
                    <AdjustRow key={row.icons[0][0]} $indent={row.indent}>
                      {row.icons.map(([name, Icon]) => (
                        <IconButton key={name} aria-label={name}><Icon /></IconButton>
                      ))}
                    </AdjustRow>
                  ))}
                </AdjustBody>
              </Panel>

              <Panel $grow>
                <Tabs names={["图层", "通道", "路径"]} />
                <LayerBar $height={42}>
                  <Dropdown
                    label="类型" value="类型" width={106} indent={8}
                    icon={<><Spacer $width={8} /><SearchIcon /></>}
                  />
                  <Spacer $width={27} />
                  <IconButton aria-label="像素图层"><PictureIcon /></IconButton>
                  <Spacer $width={7} />
                  <IconButton aria-label="调整图层"><HalfCircle /></IconButton>
                  <Spacer $width={8} />
                  <IconButton aria-label="文字图层"><TypeMark>T</TypeMark></IconButton>
                </LayerBar>
                <LayerBar $height={42}>
                  <Dropdown label="混合模式" value="正常" width={165} />
                  <Spacer $width={8} />
                  <LayerText>不透明度:</LayerText>
                </LayerBar>
                <LayerBar $height={45}>
                  <LayerText>锁定:</LayerText>
                  <Spacer $width={7} />
                  <IconButton aria-label="锁定透明像素"><CheckerIcon /></IconButton>
                  <Spacer $width={6} />
                  <IconButton aria-label="锁定图像像素"><BrushIcon /></IconButton>
                  <Spacer $width={5} />
                  <IconButton aria-label="锁定位置"><MoveIcon /></IconButton>
                  <Spacer $width={5} />
                  <IconButton aria-label="锁定全部"><LockIcon /></IconButton>
                  <Spacer $width={27} />
                  <LayerText>填充:</LayerText>
                </LayerBar>
                <LayerRow $selected>
                  <EyeCell aria-label="可见性"><EyeIcon /></EyeCell>
                  <LayerThumb />
                  <LayerName>书本</LayerName>
                </LayerRow>
                <LayerRow>
                  <EyeCell aria-label="可见性"><EyeIcon /></EyeCell>
                  <PlainThumb />
                  <LayerName $locked>背景</LayerName>
                </LayerRow>
                <EmptyList />
                <LayerFooter>
                  <IconButton aria-label="链接图层"><LinkIcon /></IconButton>
                  <IconButton aria-label="图层样式"><FxMark>fx.</FxMark></IconButton>
                  <IconButton aria-label="添加蒙版"><MaskIcon /></IconButton>
                  <IconButton aria-label="新建调整图层"><HalfCircleMenu /></IconButton>
                  <IconButton aria-label="新建组"><FolderIcon /></IconButton>
                </LayerFooter>
              </Panel>
            </Panels>
          </DockBody>
        </Dock>
      </Workspace>
    </Window>
  );
}
